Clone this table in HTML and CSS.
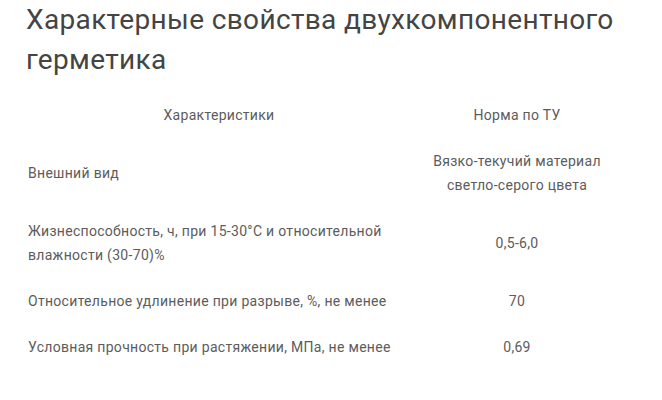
FILE: index.html
```html
<!DOCTYPE html>
<html lang="ru">
<head>
<meta charset="utf-8">
<link rel="stylesheet" href="styles.css">
</head>
<body>
<div class="page">
  <h2 class="title">Характерные свойства двухкомпонентного герметика</h2>
  <table class="props">
    <thead>
      <tr><th class="c-name">Характеристики</th><th class="c-val">Норма по ТУ</th></tr>
    </thead>
    <tbody>
      <tr><td class="c-name">Внешний вид</td><td class="c-val">Вязко-текучий материал светло-серого цвета</td></tr>
      <tr><td class="c-name">Жизнеспособность, ч, при 15-30°С и относительной влажности (30-70)%</td><td class="c-val">0,5-6,0</td></tr>
      <tr><td class="c-name">Относительное удлинение при разрыве, %, не менее</td><td class="c-val">70</td></tr>
      <tr><td class="c-name">Условная прочность при растяжении, МПа, не менее</td><td class="c-val">0,69</td></tr>
    </tbody>
  </table>
</div>
</body>
</html>
```

FILE: styles.css
```css
html, body {
  margin: 0;
  padding: 0;
  background: #ffffff;
}
.page {
  padding: 0 24px;
  font-family: Roboto, "Noto Sans", sans-serif;
}
.title {
  margin: 0 0 12px 0;
  padding-left: 2px;
  font-size: 28px;
  line-height: 40px;
  font-weight: 400;
  letter-spacing: 0.35px;
  color: #444444;
  width: 610px;
}
.props {
  border-collapse: collapse;
  width: 596px;
  font-size: 14px;
  line-height: 24px;
  letter-spacing: 0.3px;
  color: #5c5c5c;
}
.props th, .props td {
  padding: 11px 4px;
  font-weight: 400;
  vertical-align: middle;
}
.props th { text-align: center; }
.c-name { width: 382px; text-align: left; }
.c-val { text-align: center; }
```
